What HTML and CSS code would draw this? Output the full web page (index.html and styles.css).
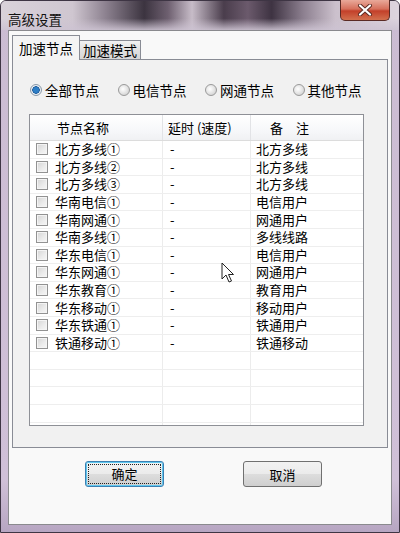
FILE: index.html
```html
<!DOCTYPE html>
<html lang="zh-CN">
<head>
  <meta charset="UTF-8" />
  <title>高级设置</title>
  <link rel="stylesheet" href="styles.css">
</head>
<body>
  <div class="window">
    <div class="titlebar">
      <span class="title">高级设置</span>
      <button class="close-btn">
        <svg width="16" height="12" viewBox="0 0 16 12">
          <path d="M3 1.5 L13 10.5 M13 1.5 L3 10.5" stroke="#5a2a22" stroke-width="4" stroke-linecap="round"/>
          <path d="M3 1.5 L13 10.5 M13 1.5 L3 10.5" stroke="#ffffff" stroke-width="2.2" stroke-linecap="round"/>
        </svg>
      </button>
    </div>

    <div class="client">
      <div class="tabs">
        <div class="tab active">加速节点</div>
        <div class="tab">加速模式</div>
      </div>

      <div class="panel">
        <div class="radios">
          <label class="radio"><span class="dot checked"></span>全部节点</label>
          <label class="radio"><span class="dot"></span>电信节点</label>
          <label class="radio"><span class="dot"></span>网通节点</label>
          <label class="radio"><span class="dot"></span>其他节点</label>
        </div>

        <div class="listbox">
          <div class="row head">
            <div class="cell c1">节点名称</div>
            <div class="cell c2">延时 (速度)</div>
            <div class="cell c3">备　注</div>
          </div>
          <div class="row"><div class="cell c1"><span class="check"></span>北方多线①</div><div class="cell c2">-</div><div class="cell c3">北方多线</div></div>
          <div class="row"><div class="cell c1"><span class="check"></span>北方多线②</div><div class="cell c2">-</div><div class="cell c3">北方多线</div></div>
          <div class="row"><div class="cell c1"><span class="check"></span>北方多线③</div><div class="cell c2">-</div><div class="cell c3">北方多线</div></div>
          <div class="row"><div class="cell c1"><span class="check"></span>华南电信①</div><div class="cell c2">-</div><div class="cell c3">电信用户</div></div>
          <div class="row"><div class="cell c1"><span class="check"></span>华南网通①</div><div class="cell c2">-</div><div class="cell c3">网通用户</div></div>
          <div class="row"><div class="cell c1"><span class="check"></span>华南多线①</div><div class="cell c2">-</div><div class="cell c3">多线线路</div></div>
          <div class="row"><div class="cell c1"><span class="check"></span>华东电信①</div><div class="cell c2">-</div><div class="cell c3">电信用户</div></div>
          <div class="row"><div class="cell c1"><span class="check"></span>华东网通①</div><div class="cell c2">-</div><div class="cell c3">网通用户</div></div>
          <div class="row"><div class="cell c1"><span class="check"></span>华东教育①</div><div class="cell c2">-</div><div class="cell c3">教育用户</div></div>
          <div class="row"><div class="cell c1"><span class="check"></span>华东移动①</div><div class="cell c2">-</div><div class="cell c3">移动用户</div></div>
          <div class="row"><div class="cell c1"><span class="check"></span>华东铁通①</div><div class="cell c2">-</div><div class="cell c3">铁通用户</div></div>
          <div class="row"><div class="cell c1"><span class="check"></span>铁通移动①</div><div class="cell c2">-</div><div class="cell c3">铁通移动</div></div>
          <div class="row"><div class="cell c1"></div><div class="cell c2"></div><div class="cell c3"></div></div>
          <div class="row"><div class="cell c1"></div><div class="cell c2"></div><div class="cell c3"></div></div>
          <div class="row"><div class="cell c1"></div><div class="cell c2"></div><div class="cell c3"></div></div>
          <div class="row"><div class="cell c1"></div><div class="cell c2"></div><div class="cell c3"></div></div>
          <div class="row"><div class="cell c1"></div><div class="cell c2"></div><div class="cell c3"></div></div>
        </div>
      </div>

      <div class="buttons">
        <button class="btn default"><span class="focus">确定</span></button>
        <button class="btn">取消</button>
      </div>
    </div>

    <!-- mouse pointer -->
    <svg class="cursor" width="14" height="22" viewBox="0 0 14 22">
      <path d="M1 1 L1 17 L5 13 L8 20 L10.5 19 L7.5 12.5 L12.5 12.5 Z" fill="#fff" stroke="#222" stroke-width="1" stroke-linejoin="round"/>
    </svg>
  </div>
</body>
</html>
```

FILE: styles.css
```css
* {
  box-sizing: border-box;
}
body {
  margin: 0;
  width: 400px;
  height: 533px;
  overflow: hidden;
  font-family: "Noto Sans CJK SC", "Noto Sans", sans-serif;
  font-size: 13px;
  color: #000;
  background: #fff;
}
.window {
  position: relative;
  width: 400px;
  height: 533px;
  display: flex;
  flex-direction: column;
  padding: 0 7px 7px;
  border: 1px solid #3e3544;
  border-radius: 6px 6px 0 0;
  background: linear-gradient(to bottom, #cbbcd2, #d0c0d8 90%, #b7a6c2);
}
.titlebar {
  height: 29px;
  display: flex;
  align-items: flex-start;
  margin: 0 -7px;
  padding: 0 9px 0 7px;
  border-radius: 5px 5px 0 0;
  background:
    linear-gradient(to bottom, rgba(255,255,255,0) 60%, rgba(205,195,210,0.9)),
    linear-gradient(to right, #d9d2da 0%, #cfc6d0 18%, #8f8492 26%, #3c3440 36%, #6e6070 42%, #c7bcc8 48%, #4a3d4c 56%, #6b5a6c 62%, #3e3342 68%, #8d8090 76%, #cbc0cc 84%, #ddd4de 100%);
}
.title {
  margin-top: 8px;
  font-size: 13.5px;
  color: #111;
}
.close-btn {
  margin-left: auto;
  margin-top: -1px;
  width: 50px;
  height: 21px;
  padding: 0;
  display: flex;
  align-items: center;
  justify-content: center;
  border: 1px solid #5a2a24;
  border-top: none;
  border-radius: 0 0 5px 5px;
  background: linear-gradient(to bottom, #e9a99a, #d6705c 45%, #c3402a 55%, #d2704e);
}
.client {
  flex: 1;
  display: flex;
  flex-direction: column;
  padding: 5px 3px 0;
  border: 1px solid #8a8a8e;
  background: #f9f9f9;
}
.tabs {
  display: flex;
  align-items: flex-end;
  height: 24px;
  margin-bottom: -1px;
}
.tab {
  height: 20px;
  padding: 0 3px;
  line-height: 18px;
  font-size: 13.5px;
  border: 1px solid #898c95;
  border-left: none;
  border-bottom: none;
  background: linear-gradient(to bottom, #f2f2f2, #e0e0e0 50%, #d6d6d6);
}
.tab.active {
  position: relative;
  z-index: 1;
  width: 68px;
  height: 25px;
  padding: 0 6px;
  line-height: 24px;
  border-left: 1px solid #898c95;
  background: #f4f4f4;
}
.panel {
  height: 389px;
  padding: 21px 0 0 16px;
  border: 1px solid #898c95;
  background: #f1f1f1;
}
.radios {
  display: flex;
  height: 17px;
  margin-left: 1px;
}
.radio {
  width: 87.5px;
  display: flex;
  align-items: center;
  gap: 3px;
  font-size: 13.5px;
}
.dot {
  width: 12px;
  height: 12px;
  border-radius: 50%;
  border: 1px solid #9a9a9a;
  background: radial-gradient(circle at 40% 40%, #ffffff, #e4e4e4 50%, #c6c6c6);
}
.dot.checked {
  border-color: #8a9aaa;
  background: radial-gradient(circle, #2d7ec6 0 2.5px, #1d5a9a 3.5px, #eef2f6 4px, #d8dde2);
}
.listbox {
  width: 335px;
  height: 312px;
  margin-top: 16px;
  overflow: hidden;
  border: 1px solid #8e9096;
  background: #fff;
}
.row {
  display: grid;
  grid-template-columns: 133px 88px 1fr;
  height: 17.6px;
  border-bottom: 1px solid #eeeeee;
}
.row.head {
  height: 26px;
  border-bottom: 1px solid #dcdcdc;
  background: linear-gradient(to bottom, #ffffff, #f7f8fa 60%, #f0f1f3);
}
.cell {
  display: flex;
  align-items: center;
  white-space: nowrap;
  line-height: 16px;
  border-right: 1px solid #ececec;
}
.cell.c3 {
  border-right: none;
}
.row .c1 {
  padding-left: 6px;
}
.row .c2 {
  padding-left: 7px;
}
.row .c3 {
  padding-left: 5px;
}
.head .c1 {
  padding-left: 27px;
}
.head .c2 {
  padding-left: 5px;
}
.head .c3 {
  padding-left: 19px;
}
.head .cell {
  border-right-color: #e2e3e6;
}
.check {
  width: 12px;
  height: 12px;
  margin-right: 7px;
  border: 1px solid #929292;
  background: linear-gradient(135deg, #d4d4d4, #ececec 60%, #f6f6f6);
  box-shadow: inset 0 0 0 1px #f4f4f4;
}
.buttons {
  display: flex;
  gap: 79px;
  margin-top: 13px;
  padding-left: 73px;
}
.btn {
  width: 79px;
  height: 26px;
  padding: 0;
  font-family: inherit;
  font-size: 13px;
  color: #000;
  border: 1px solid #707070;
  border-radius: 3px;
  background: linear-gradient(to bottom, #f2f2f2, #ebebeb 50%, #dddddd 51%, #cfcfcf);
}
.btn.default {
  border-color: #3c7fb1;
  box-shadow: inset 0 0 0 1px #5fc8f0;
}
.focus {
  display: block;
  margin: 2px;
  height: 20px;
  line-height: 18px;
  border: 1px dotted #222;
}
.cursor {
  position: absolute;
  left: 220px;
  top: 261px;
}
```
